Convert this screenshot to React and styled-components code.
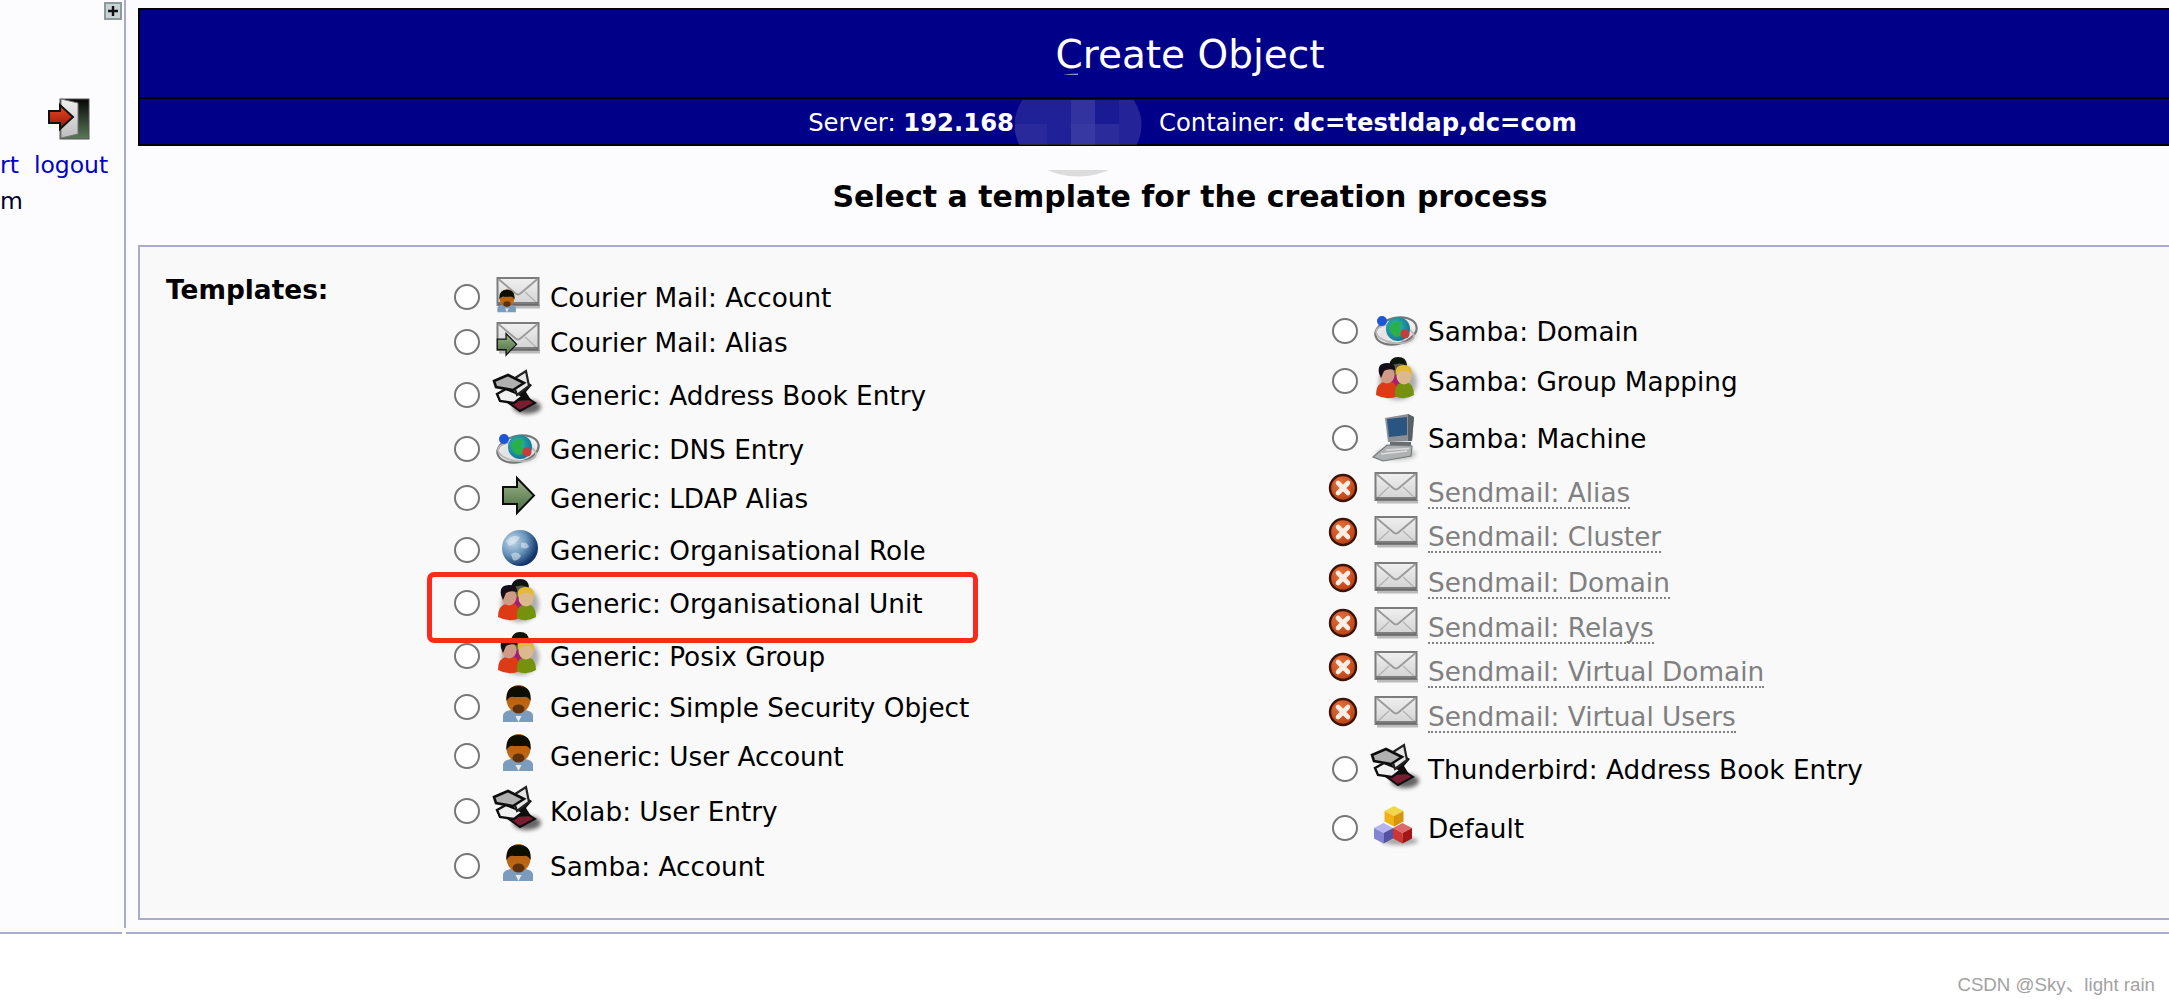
import React from "react";
import styled, { createGlobalStyle } from "styled-components";

const Global = createGlobalStyle`
  html, body { margin: 0; padding: 0; background: #fff; overflow: hidden; }
  body { font-family: "DejaVu Sans", Verdana, sans-serif; color: #000; }
`;

const Page = styled.div`
  position: relative;
  width: 2169px;
  height: 1004px;
  overflow: hidden;
  background: #fff;
`;
const Frame = styled.div`
  display: flex;
  height: 932px;
  overflow: hidden;
  background: #fcfcff;
`;
const Sidebar = styled.aside`
  flex: 0 0 124px;
  height: 928px;
  box-sizing: content-box;
  border-right: 2px solid #aaaacc;
  display: flex;
  flex-direction: column;
`;
const ExpandButton = styled.div`
  align-self: flex-end;
  width: 18px;
  height: 18px;
  margin: 2px 2px 0 0;
  box-sizing: border-box;
  border: 2px solid #8d9a9c;
  background: #c9d3d6;
  display: flex;
  align-items: center;
  justify-content: center;
`;
const DoorSlot = styled.div`
  margin: 78px 0 0 47px;
  width: 44px;
  height: 44px;
`;
const ActionRow = styled.div`
  display: flex;
  gap: 15px;
  margin-top: 6px;
  font-size: 23.5px;
  line-height: 34px;
`;
const SideLink = styled.span`
  color: #0000cc;
`;
const SideNote = styled.div`
  font-size: 23.5px;
  line-height: 38px;
  color: #000033;
`;
const Main = styled.main`
  flex: 0 0 2104px;
  margin: 8px 0 0 12px;
  display: flex;
  flex-direction: column;
`;
const Header = styled.header`
  position: relative;
  border: 2px solid #000;
  background: #000088;
  color: #fff;
  text-align: center;
`;
const Title = styled.h1`
  margin: 0;
  height: 84px;
  padding-top: 3px;
  line-height: 84px;
  font-size: 39px;
  font-weight: 400;
  border-bottom: 2px solid #000;
`;
const SubBar = styled.div`
  height: 44px;
  padding: 1px 0 0 5px;
  display: flex;
  justify-content: center;
  align-items: center;
  gap: 145px;
  font-size: 24.3px;
`;
const SubItem = styled.span`
  white-space: nowrap;
  b { font-weight: 700; }
`;
const Smudge = styled.svg`
  position: absolute;
  left: 874px;
  top: 63px;
  overflow: visible;
`;
const Heading = styled.h3`
  margin: 0;
  height: 97px;
  padding-top: 2px;
  line-height: 97px;
  text-align: center;
  font-size: 30px;
  font-weight: 700;
`;
const Panel = styled.section`
  border: 2px solid #aaaacc;
  background: #f9f9f9;
  height: 671px;
  display: grid;
  grid-template-columns: 314px 878px 1fr;
  align-items: start;
`;
const PanelLabel = styled.div`
  padding: 28px 0 0 26px;
  font-size: 26.4px;
  font-weight: 700;
  line-height: 30px;
`;
const Column = styled.div`
  display: flex;
  flex-direction: column;
  padding-top: ${(p) => p.$top}px;
`;
const Row = styled.label`
  display: flex;
  align-items: center;
  height: 44px;
  margin-top: ${(p) => p.$gap}px;
  font-size: 26.3px;
  white-space: nowrap;
`;
const Radio = styled.input.attrs({ type: "radio" })`
  appearance: none;
  flex: none;
  width: 26px;
  height: 26px;
  margin: 0;
  box-sizing: border-box;
  border: 2px solid #767676;
  border-radius: 50%;
  background: #fff;
`;
const Blocked = styled.svg`
  flex: none;
  width: 30px;
  height: 30px;
  margin-left: -4px;
`;
const IconSlot = styled.svg`
  flex: none;
  width: 44px;
  height: 44px;
  margin: -4px 10px 0 16px;
  overflow: visible;
`;
const Name = styled.span`
  padding-top: 2px;
  line-height: 30px;
`;
const DisabledName = styled.span`
  margin-top: 11px;
  line-height: 28px;
  color: #808080;
  border-bottom: 2px dotted #808080;
`;
const BottomRule = styled.div`
  display: flex;
  gap: 4px;
  height: 2px;
`;
const RuleSegment = styled.div`
  flex: ${(p) => (p.$short ? "0 0 122px" : "1")};
  background: #aaaacc;
`;
const Watermark = styled.div`
  margin: 41px 14px 0 0;
  text-align: right;
  font: 18.7px/20px "Liberation Sans", "Noto Sans CJK SC", sans-serif;
  color: #a2a2a2;
`;
const Highlight = styled.div`
  position: absolute;
  left: 427px;
  top: 572px;
  width: 551px;
  height: 71px;
  box-sizing: border-box;
  border: 5px solid #fb2a1e;
  border-radius: 7px;
`;
const DefsHolder = styled.svg`
  position: absolute;
  width: 0;
  height: 0;
`;

const Defs = () => (
  <DefsHolder aria-hidden="true">
    <defs>
      <filter id="soft" x="-20%" y="-20%" width="140%" height="140%">
        <feGaussianBlur stdDeviation="0.6" />
      </filter>
      <filter id="shade" x="-40%" y="-40%" width="180%" height="180%">
        <feGaussianBlur stdDeviation="2" />
      </filter>
      <linearGradient id="env" x1="0" y1="0" x2="0" y2="1">
        <stop offset="0" stopColor="#f0f0f0" />
        <stop offset="1" stopColor="#d2d2d2" />
      </linearGradient>
      <linearGradient id="arrowG" x1="0" y1="0" x2="0" y2="1">
        <stop offset="0" stopColor="#9cb58c" />
        <stop offset="1" stopColor="#476a3e" />
      </linearGradient>
      <radialGradient id="earth" cx="0.3" cy="0.32" r="0.85">
        <stop offset="0" stopColor="#c6d8e8" />
        <stop offset="0.45" stopColor="#6a95bc" />
        <stop offset="0.8" stopColor="#153a70" />
        <stop offset="1" stopColor="#0a1f48" />
      </radialGradient>
      <radialGradient id="teal" cx="0.4" cy="0.4" r="0.7">
        <stop offset="0" stopColor="#35c2a0" />
        <stop offset="1" stopColor="#0a6a9a" />
      </radialGradient>
      <radialGradient id="errFill" cx="0.4" cy="0.3" r="0.8">
        <stop offset="0" stopColor="#e8703a" />
        <stop offset="1" stopColor="#b53a10" />
      </radialGradient>
      <linearGradient id="doorFrame" x1="0" y1="0" x2="0" y2="1">
        <stop offset="0" stopColor="#060606" />
        <stop offset="1" stopColor="#5a7a58" />
      </linearGradient>
      <linearGradient id="doorLeaf" x1="0" y1="0" x2="0" y2="1">
        <stop offset="0" stopColor="#f0f0f0" />
        <stop offset="1" stopColor="#bdbdbd" />
      </linearGradient>
      <linearGradient id="redArrow" x1="0" y1="0" x2="0" y2="1">
        <stop offset="0" stopColor="#e84a24" />
        <stop offset="1" stopColor="#9a1408" />
      </linearGradient>
      <linearGradient id="face" x1="0" y1="0" x2="0" y2="1">
        <stop offset="0" stopColor="#a95a10" />
        <stop offset="1" stopColor="#c46c14" />
      </linearGradient>
    </defs>
  </DefsHolder>
);

const EnvelopeShape = ({ dy = 0 }) => (
  <g transform={`translate(0 ${dy})`} filter="url(#soft)">
    <rect x="3" y="36" width="41" height="3.5" fill="#000" opacity=".25" />
    <rect x="1.5" y="9" width="41" height="27" fill="url(#env)" stroke="#7c7c7c" strokeWidth="2" />
    <path d="M2.5 10 L19 24 Q22 27 25 24 L41.5 10" fill="none" stroke="#9a9a9a" strokeWidth="1.8" />
    <path d="M3 34 L15 23 M41 34 L29 23" fill="none" stroke="#b4b4b4" strokeWidth="1.4" />
    <rect x="2" y="33" width="40" height="3" fill="#666" opacity=".8" />
  </g>
);

const PersonShape = () => (
  <g>
    <path d="M7 39 V32 Q8 28 15 27 H29 Q36 28 37 32 V39 Z" fill="#7b9cbe" />
    <ellipse cx="22.5" cy="16" rx="12" ry="14" fill="url(#face)" />
    <path d="M10.5 18 Q9 3 22.5 3 Q36 3 34.5 18 Q32 13 27 14 H18 Q13 13 10.5 18 Z" fill="#0e0905" />
    <ellipse cx="22.5" cy="26" rx="6" ry="4.5" fill="#5e3208" />
    <path d="M19.5 33 L22.5 39 L25.5 33 Z" fill="#e7edf2" />
  </g>
);

const ArrowShape = () => (
  <path d="M7 13 H21 V4 L38 21.5 L21 39 V30 H7 Z" fill="url(#arrowG)" stroke="#111" strokeWidth="2" strokeLinejoin="miter" />
);

const GroupShape = () => (
  <g filter="url(#soft)">
    <ellipse cx="24" cy="25" rx="19" ry="18" fill="#000" opacity=".3" filter="url(#shade)" />
    <ellipse cx="24" cy="10" rx="9" ry="8.5" fill="#5e5a4c" />
    <path d="M15 9 Q16 0 24 0 Q33 0 33 9 Q27 4 15 9 Z" fill="#0d120d" />
    <path d="M17 18 H32 V31 H17 Z" fill="#a81f72" />
    <path d="M2 38 Q2 26 11 24.5 H17 Q24 26 24 39 Q13 44 2 38 Z" fill="#dd3a18" />
    <ellipse cx="13" cy="18" rx="7.5" ry="8.5" fill="#cf9a86" />
    <path d="M5 16 Q3 6 13 6 Q22 6 21 13 Q14 11 10 14 L7 21 Z" fill="#120e16" />
    <path d="M21 39 Q20 28 27 25.5 H33 Q40 27 40 38 Q30 44 21 39 Z" fill="#76910f" />
    <ellipse cx="30" cy="19" rx="7.5" ry="8.5" fill="#dcb88e" />
    <path d="M22 18 Q20 8 30 8 Q39 8 38 19 Q35 13 30 14 Q25 14 22 18 Z" fill="#e2ba36" />
  </g>
);

const AtomShape = () => (
  <g filter="url(#soft)">
    <ellipse cx="23" cy="27" rx="20" ry="11" fill="#000" opacity=".14" filter="url(#shade)" />
    <ellipse cx="22" cy="24" rx="21" ry="13" transform="rotate(-14 22 24)" fill="#ececec" fillOpacity=".6" stroke="#777" strokeWidth="2.2" />
    <ellipse cx="21" cy="27" rx="19" ry="9" transform="rotate(8 21 27)" fill="none" stroke="#b8b8b8" strokeWidth="1.8" />
    <circle cx="24" cy="22" r="12" fill="url(#teal)" />
    <path d="M15 20 Q20 13 27 15 Q24 22 29 27 Q22 33 18 27 Z" fill="#2bb04a" />
    <circle cx="8" cy="14" r="5" fill="#1f55d6" />
    <circle cx="31" cy="27" r="4.6" fill="#c93a3e" />
  </g>
);

const GlobeShape = () => (
  <g filter="url(#soft)">
    <circle cx="24" cy="22" r="18" fill="url(#earth)" />
    <path d="M10 15 Q16 8 24 11 Q20 18 13 20 Z M15 28 Q21 24 25 30 Q21 36 17 34 Z M25 17 Q31 15 33 21 Q28 24 25 21 Z" fill="#e8eef4" opacity=".55" />
  </g>
);

const BookShape = () => (
  <g filter="url(#soft)">
    <ellipse cx="31" cy="36" rx="14" ry="7" fill="#000" opacity=".6" filter="url(#shade)" />
    <path d="M10 30 L27 24 L39 32 L24 40 Z" fill="#7a1a30" stroke="#111" strokeWidth="2" />
    <path d="M28 9 L36 14 L30 21 L35 29 L22 30 L19 14 Z" fill="#111" />
    <path d="M1 23 L10 18 L27 25 L18 32 L4 30 Z" fill="#f0f0f0" stroke="#111" strokeWidth="2.4" />
    <path d="M16 9 L30 0 L33 15 L21 24 Z" fill="#e6e6e6" stroke="#222" strokeWidth="2.2" />
    <path d="M-2 10 L12 4 L28 12 L17 19 L0 16 Z" fill="#b0b0b0" stroke="#111" strokeWidth="2.6" />
  </g>
);

const ComputerShape = () => (
  <g filter="url(#soft)">
    <ellipse cx="22" cy="40" rx="20" ry="6" fill="#000" opacity=".25" filter="url(#shade)" />
    <path d="M11 4 L34 0 L40 3 L38 27 L14 28 Z" fill="#8a9094" />
    <path d="M34 0 L40 3 L38 27 L34 27 Z" fill="#5a6064" />
    <path d="M13 5 L33 3 L33 21 L15 23 Z" fill="#2a5480" />
    <path d="M16 28 H37 V33 H16 Z" fill="#666c70" />
    <path d="M-1 43 L13 31 L38 32 L37 42 L9 47 Z" fill="#aeb2b2" stroke="#767a7a" strokeWidth="1.2" />
    <path d="M7 40 L33 37 M12 36 L35 34.5" stroke="#dcdede" strokeWidth="1.6" />
  </g>
);

const Cube = ({ x, y, top, left, right }) => (
  <g transform={`translate(${x} ${y})`}>
    <path d="M0 -10 L9.5 -5 L0 0 L-9.5 -5 Z" fill={top} />
    <path d="M-9.5 -5 L0 0 V10.5 L-9.5 5.5 Z" fill={left} />
    <path d="M9.5 -5 L0 0 V10.5 L9.5 5.5 Z" fill={right} />
  </g>
);

const BlocksShape = () => (
  <g filter="url(#soft)">
    <ellipse cx="26" cy="37" rx="18" ry="4" fill="#000" opacity=".35" filter="url(#shade)" />
    <Cube x="20" y="12" top="#f2d848" left="#f0b018" right="#d8940e" />
    <Cube x="9.5" y="29" top="#b4b4ee" left="#8484d4" right="#5252a6" />
    <Cube x="28.5" y="29" top="#dc6a6a" left="#cc3434" right="#a41414" />
  </g>
);

const ICONS = {
  envelope: <EnvelopeShape />,
  person: <g filter="url(#soft)"><PersonShape /></g>,
  group: <GroupShape />,
  atom: <AtomShape />,
  arrow: <g filter="url(#soft)"><ArrowShape /></g>,
  globe: <GlobeShape />,
  book: <BookShape />,
  computer: <ComputerShape />,
  blocks: <BlocksShape />,
  courierUser: (
    <>
      <EnvelopeShape dy={-4} />
      <g transform="translate(-3 15) scale(.62)" filter="url(#soft)"><PersonShape /></g>
    </>
  ),
  courierAlias: (
    <>
      <EnvelopeShape dy={-4} />
      <g transform="translate(-3 13) scale(.62)" filter="url(#soft)"><ArrowShape /></g>
    </>
  ),
};

const LEFT = [
  ["courierUser", "Courier Mail: Account", 0],
  ["courierAlias", "Courier Mail: Alias", 1],
  ["book", "Generic: Address Book Entry", 9],
  ["atom", "Generic: DNS Entry", 10],
  ["arrow", "Generic: LDAP Alias", 5],
  ["globe", "Generic: Organisational Role", 8],
  ["group", "Generic: Organisational Unit", 9],
  ["group", "Generic: Posix Group", 9],
  ["person", "Generic: Simple Security Object", 7],
  ["person", "Generic: User Account", 5],
  ["book", "Kolab: User Entry", 11],
  ["person", "Samba: Account", 11],
];

const RIGHT = [
  ["atom", "Samba: Domain", 0],
  ["group", "Samba: Group Mapping", 6],
  ["computer", "Samba: Machine", 13],
  ["envelope", "Sendmail: Alias", 6, true],
  ["envelope", "Sendmail: Cluster", 0, true],
  ["envelope", "Sendmail: Domain", 2, true],
  ["envelope", "Sendmail: Relays", 1, true],
  ["envelope", "Sendmail: Virtual Domain", 0, true],
  ["envelope", "Sendmail: Virtual Users", 1, true],
  ["book", "Thunderbird: Address Book Entry", 13],
  ["blocks", "Default", 15],
];

const BlockedMark = () => (
  <Blocked viewBox="0 0 30 30">
    <circle cx="15" cy="15" r="13" fill="url(#errFill)" stroke="#3a1408" strokeWidth="2.4" />
    <path d="M10 10 L20 20 M20 10 L10 20" stroke="#fbeee4" strokeWidth="4.6" strokeLinecap="round" />
  </Blocked>
);

const Template = ({ icon, name, gap, disabled }) => (
  <Row $gap={gap}>
    {disabled ? <BlockedMark /> : <Radio name="template" />}
    <IconSlot viewBox="0 0 44 44">{ICONS[icon]}</IconSlot>
    {disabled ? <DisabledName>{name}</DisabledName> : <Name>{name}</Name>}
  </Row>
);

const MOSAIC = [
  [1, 0, 0.13], [33, 0, 0.13], [57, 0, 0.2], [81, 0, 0.1], [105, 0, 0.14],
  [1, 24, 0.16], [33, 24, 0.13], [57, 24, 0.22], [81, 24, 0.17], [105, 24, 0.14],
];

export default function App() {
  return (
    <Page>
      <Global />
      <Defs />
      <Frame>
        <Sidebar>
          <ExpandButton>
            <svg width="12" height="12" viewBox="0 0 12 12">
              <path d="M6 1 V11 M1 6 H11" stroke="#111" strokeWidth="2.4" />
            </svg>
          </ExpandButton>
          <DoorSlot>
            <svg width="44" height="44" viewBox="0 0 44 44">
              <rect x="13" y="1" width="29" height="40" fill="url(#doorFrame)" stroke="#555" />
              <path d="M14 2 L31 6 V37 L14 41 Z" fill="url(#doorLeaf)" stroke="#777" transform="translate(0 -1)" />
              <path d="M2 13 H13 V7 L26 19 L13 31 V25 H2 Z" fill="url(#redArrow)" stroke="#111" strokeWidth="2" />
            </svg>
          </DoorSlot>
          <ActionRow>
            <SideLink>rt</SideLink>
            <SideLink>logout</SideLink>
          </ActionRow>
          <SideNote>m</SideNote>
        </Sidebar>
        <Main>
          <Header>
            <Title>Create Object</Title>
            <SubBar>
              <SubItem>Server: <b>192.168</b></SubItem>
              <SubItem>Container: <b>dc=testldap,dc=com</b></SubItem>
            </SubBar>
            <Smudge width="128" height="104" viewBox="0 0 128 104">
              <defs>
                <clipPath id="oval"><ellipse cx="64" cy="52" rx="63.5" ry="51.5" /></clipPath>
              </defs>
              <g clipPath="url(#oval)">
                <g transform="translate(0 27)">
                  {MOSAIC.map(([x, y, o]) => (
                    <rect key={`${x}-${y}`} x={x} y={y} width={x === 1 ? 32 : 24} height={y === 0 ? 24 : 21} fill="#fff" opacity={o} />
                  ))}
                </g>
                <rect x="28" y="97" width="70" height="7" fill="#dcdcdc" />
                <rect x="38" y="0" width="26" height="2" fill="#8a8ac4" />
              </g>
            </Smudge>
          </Header>
          <Heading>Select a template for the creation process</Heading>
          <Panel>
            <PanelLabel>Templates:</PanelLabel>
            <Column $top={28}>
              {LEFT.map(([icon, name, gap]) => (
                <Template key={name} icon={icon} name={name} gap={gap} />
              ))}
            </Column>
            <Column $top={62}>
              {RIGHT.map(([icon, name, gap, disabled]) => (
                <Template key={name} icon={icon} name={name} gap={gap} disabled={disabled} />
              ))}
            </Column>
          </Panel>
        </Main>
      </Frame>
      <BottomRule>
        <RuleSegment $short />
        <RuleSegment />
      </BottomRule>
      <Watermark>CSDN @Sky、light rain</Watermark>
      <Highlight />
    </Page>
  );
}
